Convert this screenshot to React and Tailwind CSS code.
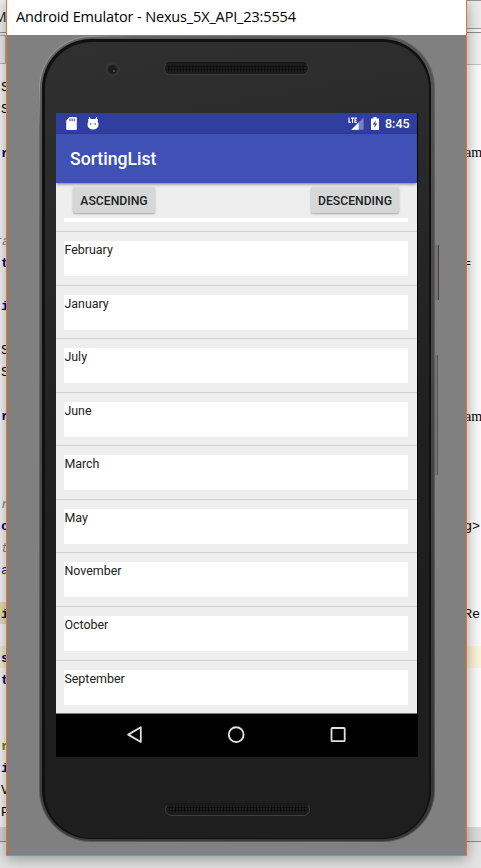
import React from "react";

const MONTHS = ["February", "January", "July", "June", "March", "May", "November", "October", "September"];

const CODE_LEFT = {
  0: ["S", "text-black ml-[1px]"],
  1: ["S", "text-black ml-[1px]"],
  3: ["r", "text-[#000080] font-bold ml-[1px]"],
  7: ["ra", "text-[#8c8c8c] italic -ml-[6px]"],
  8: ["t", "text-[#000080] font-bold ml-[1px]"],
  10: ["i", "text-[#000080] font-bold ml-[1px]"],
  12: ["S", "text-black ml-[1px]"],
  13: ["S", "text-black ml-[1px]"],
  15: ["r", "text-[#000080] font-bold ml-[1px]"],
  19: ["r", "text-[#8c8c8c] italic ml-[1px]"],
  20: ["c", "text-[#000080] font-bold ml-[1px]"],
  21: ["it", "text-[#8c8c8c] italic -ml-[7px]"],
  22: ["ra", "text-[#1a1a80] -ml-[7px]"],
  24: ["i", "text-[#000080] font-bold ml-[1px]", "bg-[#e9deb6]"],
  26: ["s", "text-[#000080] font-bold ml-[1px]", "bg-[#f3ecd3]"],
  27: ["t", "text-[#000080] font-bold ml-[1px]"],
  30: ["r", "text-[#808000] font-bold ml-[1px]"],
  31: ["i", "text-[#000080] font-bold ml-[1px]"],
  32: ["V", "text-black ml-[1px]"],
  33: ["P", "text-black ml-[1px]"],
};

const CODE_RIGHT = {
  3: ["am", "text-black font-['Liberation_Serif',serif] text-[14px]"],
  8: ["=", "text-black -ml-[2px]"],
  15: ["am", "text-black font-['Liberation_Serif',serif] text-[14px]"],
  20: ["g>", "text-black -ml-[1px]"],
  24: ["Re", "text-black -ml-[1px]"],
  26: ["", "", "bg-[#fcf5da]"],
};

const LINES = Array.from({ length: 34 }, (_, i) => i);

function CodeColumn({ lines, className }) {
  return (
    <div className={`overflow-hidden ${className}`}>
      {LINES.map((i) => {
        const l = lines[i];
        return (
          <div key={i} className={`flex h-[21.98px] items-center whitespace-pre pt-[3px] ${l && l[2] ? l[2] : ""}`}>
            {l && <span className={`leading-none ${l[1]}`}>{l[0]}</span>}
          </div>
        );
      })}
    </div>
  );
}

function Editor() {
  return (
    <div className="flex h-full w-full justify-between bg-[#e4e4e4] font-['Liberation_Mono',monospace] text-[13.4px]">
      <div className="flex w-[30px] flex-col">
        <div className="flex h-[33px] items-center overflow-hidden border-b border-[#999] bg-[#f0f0f0] font-['Open_Sans',sans-serif] text-[14px] text-[#222]">
          <span className="-ml-[6px]">M</span>
        </div>
        <div className="h-[31px] border-b border-[#b5b5b5] bg-[#ececec] pt-[2px]">
          <div className="h-[28px] w-[6px] border-r border-t border-[#b0b0b0]" />
        </div>
        <CodeColumn lines={CODE_LEFT} className="h-[763px] bg-[#f6f6f6] pt-[11px]" />
        <div className="h-[15px] border-b border-[#8a8a8a] bg-[#d6d6d6]" />
      </div>
      <div className="flex w-[30px] flex-col">
        <div className="h-[29px] border-b border-t border-[#999] bg-[#ececec]" />
        <div className="h-[4px] border-b border-[#8f8f8f] bg-[#f4f4f4]" />
        <div className="h-[32px] border-b border-[#c4c4c4] bg-[#efefef]" />
        <CodeColumn lines={CODE_RIGHT} className="h-[762px] bg-[#fafafa] pl-[14px] pt-[10px]" />
        <div className="h-[15px] border-b border-[#8a8a8a] bg-[#dcdcdc]" />
      </div>
    </div>
  );
}

function Grille() {
  return (
    <div className="h-[13px] w-[145px] shrink-0 rounded-full border border-[#3d3d3d] border-t-[#171717] bg-[#1b1b1b] p-[2px]">
      <div className="h-full w-full rounded-full bg-[radial-gradient(circle,#050505_0.8px,#202020_1.4px)] bg-[size:3px_3px]" />
    </div>
  );
}

function StatusBar() {
  return (
    <div className="flex h-[21px] items-center bg-[#303f9f] pl-[10px] pr-[7px] text-white">
      <svg width="11" height="13" viewBox="0 0 11 13" className="mt-[-1px]">
        <path d="M3.6 0H9.6A1.2 1.2 0 0 1 10.8 1.2V11.8A1.2 1.2 0 0 1 9.6 13H1.4A1.2 1.2 0 0 1 .2 11.8V3.6Z" fill="#fff" />
        <path d="M4 1.5V4.2M6.1 1.5V4.2M8.2 1.5V4.2" stroke="#303f9f" strokeWidth="1" />
      </svg>
      <svg width="12" height="13" viewBox="0 0 12 13" className="ml-[10px] mt-[-1px]">
        <path d="M2.2 0 3.2 2.6M9.8 0 8.8 2.6" stroke="#fff" strokeWidth="1.2" />
        <path d="M1.2 2H10.8V5.4H11.4V8.4A5.4 4 0 0 1 .6 8.4V5.4H1.2Z" fill="#fff" />
        <circle cx="3.8" cy="7" r=".8" fill="#303f9f" />
        <circle cx="8.2" cy="7" r=".8" fill="#303f9f" />
      </svg>
      <div className="flex-1" />
      <svg width="16" height="13" viewBox="0 0 16 13">
        <path d="M15.6 .6V12.8H3.4Z" fill="#7580c0" />
        <path d="M10.6 5.6V12.8H3.4Z" fill="#fff" />
        <path d="M0 0H9V6.4H0Z" fill="#303f9f" />
        <path d="M1 .6V5.4H3M3 1.1H6M4.5 1.1V6M8.8 1.1H7V5.4H8.8M7 3.2H8.5" fill="none" stroke="#fff" strokeWidth="1.1" />
      </svg>
      <svg width="8" height="13" viewBox="0 0 8 13" className="ml-[7px]">
        <path d="M2.4 0H5.6V1.4H8V13H0V1.4H2.4Z" fill="#fff" />
        <path d="M4.8 3.2 1.8 7.6H3.8L3.2 11 6.2 6.6H4.2Z" fill="#303f9f" />
      </svg>
      <span className="ml-[6px] w-[25px] pt-px text-[12.5px] font-medium leading-none">8:45</span>
    </div>
  );
}

function RaisedButton({ children, className }) {
  return (
    <div className={`flex h-[26px] items-center justify-center rounded-[2px] bg-[#d6d7d7] pt-[2px] text-[12.2px] font-medium text-[#212121] shadow-[0_1px_2px_rgba(0,0,0,0.3)] ${className}`}>
      {children}
    </div>
  );
}

function Screen() {
  return (
    <div className="flex h-[644px] w-[361px] flex-col overflow-hidden bg-[#eeeeee] font-['Roboto',sans-serif]">
      <StatusBar />
      <div className="z-10 flex h-[49px] shrink-0 items-center bg-[#3f51b5] pl-[14px] pt-[2px] text-[17.6px] font-medium text-white shadow-[0_1px_3px_rgba(0,0,0,0.5)]">
        SortingList
      </div>
      <div className="flex h-[35px] shrink-0 items-start justify-between pl-[17px] pr-[18px] pt-[4px]">
        <RaisedButton className="w-[82px]">ASCENDING</RaisedButton>
        <RaisedButton className="w-[88px]">DESCENDING</RaisedButton>
      </div>
      <div className="ml-[8px] mr-[9px] h-[4px] shrink-0 bg-white" />
      <div className="h-[9px] shrink-0" />
      <div className="h-[482.2px] shrink-0 overflow-hidden">
        {MONTHS.map((m) => (
          <div key={m} className="h-[53.58px] border-t border-[#d0d0d0] pl-[8px] pr-[9px] pt-[9px]">
            <div className="h-[35px] bg-white pl-[0.4px] pt-[1px] text-[12.45px] leading-[15px] text-[#212121]">{m}</div>
          </div>
        ))}
      </div>
      <div className="flex flex-1 items-center justify-between border-t border-[#777] bg-black px-[68.5px] pb-[2px]">
        <svg width="20" height="20" viewBox="0 0 20 20">
          <path d="M3.2 9.6 15.8 2.2V17Z" fill="none" stroke="#e0e0e0" strokeWidth="1.8" strokeLinejoin="round" />
        </svg>
        <svg width="20" height="20" viewBox="0 0 20 20">
          <circle cx="9.2" cy="9.6" r="7.4" fill="none" stroke="#e0e0e0" strokeWidth="1.9" />
        </svg>
        <svg width="20" height="20" viewBox="0 0 20 20">
          <rect x="2.5" y="3" width="13.2" height="13.2" rx=".8" fill="none" stroke="#e0e0e0" strokeWidth="1.8" />
        </svg>
      </div>
    </div>
  );
}

function Phone() {
  return (
    <div className="relative ml-[32px] mt-[1px] h-[806px] w-[396px]">
      <div className="absolute left-[396px] top-[209px] h-[55px] w-[4px] border-r border-[#424042] bg-[#747272]" />
      <div className="absolute left-[396px] top-[319px] h-[120px] w-[3px] border-r border-[#555] bg-[#747474]" />
      <div className="h-full w-full rounded-[52px] bg-[linear-gradient(135deg,#8a8a8a_0%,#9a9a9a_4%,#666_8%,#606060_50%,#555_100%)] p-[1px]">
        <div className="h-full w-full rounded-[51px] bg-[linear-gradient(160deg,#666_0%,#575757_10%,#484848_50%,#363536_100%)] pb-[2px] pl-[2px] pr-[3px] pt-[2px]">
          <div className="h-full w-full rounded-[49px] bg-[#101010] pb-[1px] pl-[3px] pr-[2px] pt-[3px]">
            <div className="flex h-full w-full flex-col rounded-[47px] bg-[linear-gradient(170deg,#303030_0%,#292929_20%,#1f1f1f_55%,#1e1e1e_100%)]">
              <div className="flex h-[71px] items-start pl-[60px] pt-[20px]">
                <div className="flex h-[15px] w-[15px] items-center justify-center rounded-full bg-[#353435]">
                  <div className="flex h-[9px] w-[9px] items-center justify-center rounded-full bg-[#1d1b20]">
                    <div className="ml-[3px] mt-[3px] h-[2px] w-[2px] rounded-full bg-[#76566a]" />
                  </div>
                </div>
                <div className="ml-[44px]">
                  <Grille />
                </div>
              </div>
              <div className="ml-[11px] w-[362px] border-r border-black">
                <Screen />
              </div>
              <div className="pl-[120px] pt-[46px]">
                <Grille />
              </div>
            </div>
          </div>
        </div>
      </div>
    </div>
  );
}

export default function App() {
  return (
    <div className="relative h-[868px] w-[481px] overflow-hidden bg-[#e4e4e4]">
      <Editor />
      <div className="absolute left-[6px] top-0 h-[856px] w-[461px] border-x border-b border-[#f37021] bg-[#808080] shadow-[0_3px_14px_rgba(0,0,0,0.36)]">
        <div className="flex h-[35px] items-center bg-white pb-[2px] pl-[9px] font-['Open_Sans',sans-serif] text-[14.5px] tracking-[-0.15px] text-black">
          <span className="whitespace-nowrap">Android Emulator - Nexus_5X_API_23:5554</span>
        </div>
        <Phone />
      </div>
    </div>
  );
}
